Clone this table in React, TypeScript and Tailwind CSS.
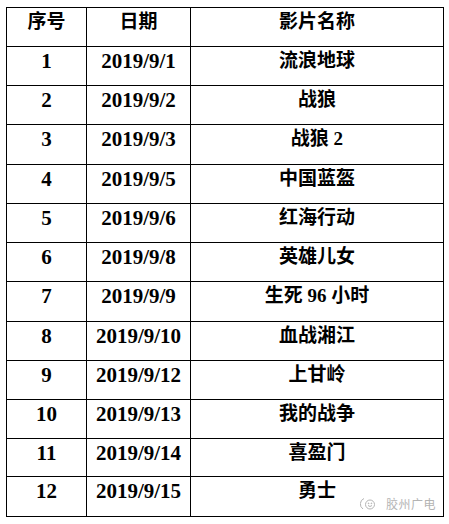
const rows = [
  { no: '1', date: '2019/9/1', name: '流浪地球', h: 'h-[39px]' },
  { no: '2', date: '2019/9/2', name: '战狼', h: 'h-[39px]' },
  { no: '3', date: '2019/9/3', name: '战狼 2', h: 'h-[40px]' },
  { no: '4', date: '2019/9/5', name: '中国蓝盔', h: 'h-[39px]' },
  { no: '5', date: '2019/9/6', name: '红海行动', h: 'h-[39px]' },
  { no: '6', date: '2019/9/8', name: '英雄儿女', h: 'h-[39px]' },
  { no: '7', date: '2019/9/9', name: '生死 96 小时', h: 'h-[40px]' },
  { no: '8', date: '2019/9/10', name: '血战湘江', h: 'h-[39px]' },
  { no: '9', date: '2019/9/12', name: '上甘岭', h: 'h-[39px]' },
  { no: '10', date: '2019/9/13', name: '我的战争', h: 'h-[39px]' },
  { no: '11', date: '2019/9/14', name: '喜盈门', h: 'h-[38px]' },
  { no: '12', date: '2019/9/15', name: '勇士', h: 'h-[40px]' },
]

const cell = 'border-r border-b border-black flex justify-center'

function Watermark() {
  return (
    <div className="absolute right-[13px] bottom-[13px] flex items-center gap-[10px] text-[#b4b4b4]">
      <svg width="16" height="14" viewBox="0 0 16 14" fill="none" stroke="currentColor" strokeWidth="1">
        {/* bubble arc */}
        <path d="M4 1.5 A6 6 0 0 0 3 12" />
        {/* face */}
        <circle cx="10" cy="7.5" r="4.5" />
        <path d="M8 8.5 Q10 10.5 12 8.5" />
        <circle cx="8.6" cy="6.3" r="0.4" fill="currentColor" />
        <circle cx="11.4" cy="6.3" r="0.4" fill="currentColor" />
      </svg>
      <span className="text-[12px] leading-none font-['Noto_Sans_CJK_SC',sans-serif] tracking-[0.5px]">
        胶州广电
      </span>
    </div>
  )
}

export default function App() {
  return (
    <div className="w-[449px] h-[524px] bg-white relative font-['Liberation_Serif','Noto_Sans_CJK_SC',serif] text-black">
      <div className="absolute left-[6px] top-[7px] w-[438px] border-l border-t border-black">
        {/* header */}
        <div className="grid grid-cols-[80px_104px_253px] h-[39px]">
          <div className={`${cell} pt-[1px] text-[19px] leading-[26px] font-semibold`}>序号</div>
          <div className={`${cell} pt-[1px] text-[19px] leading-[26px] font-semibold`}>日期</div>
          <div className={`${cell} pt-[1px] text-[19px] leading-[26px] font-semibold`}>影片名称</div>
        </div>

        {rows.map((r) => (
          <div key={r.no} className={`grid grid-cols-[80px_104px_253px] ${r.h}`}>
            <div className={`${cell} pt-[1px] text-[21px] leading-[26px] font-bold`}>{r.no}</div>
            <div className={`${cell} pt-[1px] text-[21px] leading-[26px] font-bold`}>{r.date}</div>
            <div className={`${cell} pt-[1px] text-[19px] leading-[26px] font-semibold`}>{r.name}</div>
          </div>
        ))}
      </div>

      <Watermark />
    </div>
  )
}
